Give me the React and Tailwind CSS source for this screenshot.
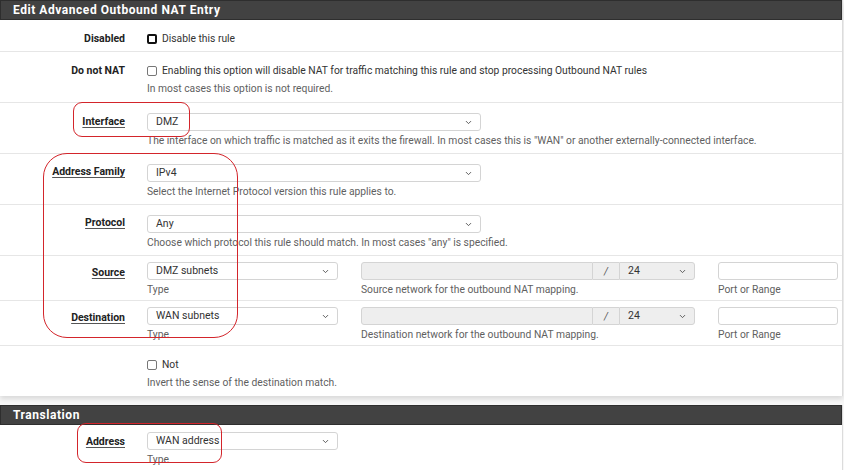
import { ChevronDown } from 'lucide-react';

// Kleine Bausteine im Stil des pfSense-Formulars
const Select = ({ value, className = '', grey = false }) => (
  <div
    className={`flex h-[18px] items-center justify-between rounded-[3px] border border-[#d4d4d4] pl-[8px] pr-[7px] text-[10.5px] text-[#333] ${grey ? 'bg-[#eeeeee]' : 'bg-white'} ${className}`}
  >
    <span className="leading-none">{value}</span>
    <ChevronDown size={9} strokeWidth={2.5} className="text-[#555]" />
  </div>
);

const Checkbox = ({ dark = false }) => (
  <span
    className={`inline-block h-[10px] w-[10px] rounded-[2px] bg-white ${dark ? 'border-2 border-[#111]' : 'border-[1.5px] border-[#777]'}`}
  />
);

const Help = ({ children, className = '' }) => (
  <div className={`mt-[3px] text-[10.3px] leading-[14px] text-[#5f5f5f] ${className}`}>{children}</div>
);

const Row = ({ label, underline = true, labelTop = 'pt-[12px]', className = '', children }) => (
  <div className={`grid grid-cols-[125px_1fr] gap-x-[22px] border-b border-[#e6e6e6] ${className}`}>
    <div className={`text-right text-[10.5px] font-bold leading-[14px] text-[#222] ${labelTop}`}>
      {label && <span className={underline ? 'underline decoration-[#555] underline-offset-2' : ''}>{label}</span>}
    </div>
    <div>{children}</div>
  </div>
);

const PanelHeader = ({ title }) => (
  <div className="h-[20px] border border-[#2e2e2e] bg-[#424242] pl-[12px] text-[12px] font-bold leading-[18px] tracking-[0.55px] text-white">
    {title}
  </div>
);

// Netzwerk-Zeile für Quelle / Ziel
const NetworkRow = ({ label, type, hint }) => (
  <Row label={label} labelTop="pt-[10px]" className="h-[45px]">
    <div className="flex pt-[6px]">
      <div className="w-[191px]">
        <Select value={type} />
        <Help>Type</Help>
      </div>
      <div className="ml-[23px] w-[334px]">
        <div className="flex h-[18px]">
          <div className="flex-1 rounded-l-[3px] border border-[#d4d4d4] bg-[#eeeeee]" />
          <div className="flex w-[26px] items-center justify-center border-y border-[#d4d4d4] bg-[#eeeeee] text-[10px] italic text-[#555]">
            /
          </div>
          <Select value="24" grey className="w-[76px] rounded-l-none" />
        </div>
        <Help>{hint}</Help>
      </div>
      <div className="ml-[23px] w-[120px]">
        <div className="h-[18px] rounded-[3px] border border-[#d4d4d4] bg-white" />
        <Help>Port or Range</Help>
      </div>
    </div>
  </Row>
);

export default function App() {
  return (
    <div
      className="relative h-[470px] w-[844px] overflow-hidden bg-[#f7f7f7] text-[10.3px]"
      style={{ fontFamily: 'Roboto, "Liberation Sans", sans-serif' }}
    >
      {/* Hauptpanel */}
      <div className="w-[843px] border-r border-[#dcdcdc] bg-white shadow-[0_3px_5px_rgba(0,0,0,0.12)]">
        <PanelHeader title="Edit Advanced Outbound NAT Entry" />

        <Row label="Disabled" underline={false} className="h-[32px]">
          <div className="flex items-center gap-[5px] pt-[12px] leading-[14px] text-[#333]">
            <Checkbox dark />
            <span>Disable this rule</span>
          </div>
        </Row>

        <Row label="Do not NAT" underline={false} className="h-[51px]">
          <div className="flex items-center gap-[5px] pt-[12px] leading-[14px] text-[#333]">
            <Checkbox />
            <span>Enabling this option will disable NAT for traffic matching this rule and stop processing Outbound NAT rules</span>
          </div>
          <Help className="mt-[4px]">In most cases this option is not required.</Help>
        </Row>

        <Row label="Interface" labelTop="pt-[12px]" className="h-[51px]">
          <div className="pt-[10px]">
            <Select value="DMZ" className="w-[334px]" />
            <Help>The interface on which traffic is matched as it exits the firewall. In most cases this is "WAN" or another externally-connected interface.</Help>
          </div>
        </Row>

        <Row label="Address Family" labelTop="pt-[11px]" className="h-[51px]">
          <div className="pt-[10px]">
            <Select value="IPv4" className="w-[334px]" />
            <Help>Select the Internet Protocol version this rule applies to.</Help>
          </div>
        </Row>

        <Row label="Protocol" labelTop="pt-[11px]" className="h-[51px]">
          <div className="pt-[10px]">
            <Select value="Any" className="w-[334px]" />
            <Help>Choose which protocol this rule should match. In most cases "any" is specified.</Help>
          </div>
        </Row>

        <NetworkRow label="Source" type="DMZ subnets" hint="Source network for the outbound NAT mapping." />
        <NetworkRow label="Destination" type="WAN subnets" hint="Destination network for the outbound NAT mapping." />

        <Row label="" className="h-[50px] border-b-0">
          <div className="flex items-center gap-[5px] pt-[12px] leading-[14px] text-[#333]">
            <Checkbox />
            <span>Not</span>
          </div>
          <Help className="mt-[4px]">Invert the sense of the destination match.</Help>
        </Row>
      </div>

      {/* Übersetzung */}
      <div className="mt-[9px] w-[843px] border-r border-[#dcdcdc] bg-white">
        <PanelHeader title="Translation" />
        <Row label="Address" labelTop="pt-[10px]" className="h-[60px] border-b-0">
          <div className="pt-[7px]">
            <Select value="WAN address" className="w-[191px]" />
            <Help>Type</Help>
          </div>
        </Row>
      </div>

      {/* Rote Markierungen über dem Formular */}
      <div className="pointer-events-none absolute left-[73px] top-[102px] h-[35px] w-[117px] rounded-[9px] border-[1.5px] border-[#d3252b]" />
      <div className="pointer-events-none absolute left-[43px] top-[153px] h-[185px] w-[195px] rounded-[24px] border-[1.5px] border-[#d3252b]" />
      <div className="pointer-events-none absolute left-[77px] top-[423px] h-[40px] w-[145px] rounded-[9px] border-[1.5px] border-[#d3252b]" />
    </div>
  );
}
